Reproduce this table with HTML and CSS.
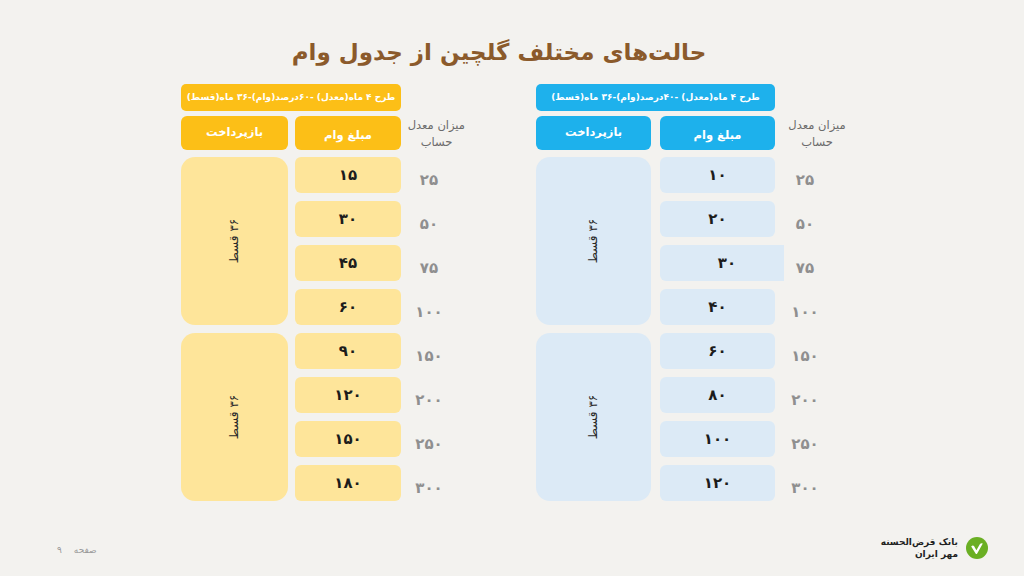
FILE: index.html
```html
<!DOCTYPE html>
<html lang="fa" dir="rtl">
<head>
<meta charset="utf-8">
<title>حالت‌های مختلف گلچین از جدول وام</title>
<link rel="stylesheet" href="styles.css">
</head>
<body>
<div class="page">
  <h1 class="title">حالت‌های مختلف گلچین از جدول وام</h1>

  <div class="tables">
    <!-- blue table -->
    <section class="table table-blue">
      <div class="banner">طرح ۴ ماه(معدل) -۴۰درصد(وام)-۳۶ ماه(قسط)</div>
      <div class="grid">
        <div class="label">میزان معدل<br>حساب</div>
        <div class="head head-amount">مبلغ وام</div>
        <div class="head head-repay">بازپرداخت</div>

        <div class="big big-1"><span class="rot">۳۶ قسط</span></div>
        <div class="big big-2"><span class="rot">۳۶ قسط</span></div>

        <div class="val r1">۲۵</div><div class="amt r1">۱۰</div>
        <div class="val r2">۵۰</div><div class="amt r2">۲۰</div>
        <div class="val r3">۷۵</div><div class="amt r3 amt-wide">۳۰</div>
        <div class="val r4">۱۰۰</div><div class="amt r4">۴۰</div>
        <div class="val r5">۱۵۰</div><div class="amt r5">۶۰</div>
        <div class="val r6">۲۰۰</div><div class="amt r6">۸۰</div>
        <div class="val r7">۲۵۰</div><div class="amt r7">۱۰۰</div>
        <div class="val r8">۳۰۰</div><div class="amt r8">۱۲۰</div>
      </div>
    </section>

    <!-- yellow table -->
    <section class="table table-yellow">
      <div class="banner">طرح ۴ ماه(معدل) -۶۰درصد(وام)-۳۶ ماه(قسط)</div>
      <div class="grid">
        <div class="label">میزان معدل<br>حساب</div>
        <div class="head head-amount">مبلغ وام</div>
        <div class="head head-repay">بازپرداخت</div>

        <div class="big big-1"><span class="rot">۳۶ قسط</span></div>
        <div class="big big-2"><span class="rot">۳۶ قسط</span></div>

        <div class="val r1">۲۵</div><div class="amt r1">۱۵</div>
        <div class="val r2">۵۰</div><div class="amt r2">۳۰</div>
        <div class="val r3">۷۵</div><div class="amt r3">۴۵</div>
        <div class="val r4">۱۰۰</div><div class="amt r4">۶۰</div>
        <div class="val r5">۱۵۰</div><div class="amt r5">۹۰</div>
        <div class="val r6">۲۰۰</div><div class="amt r6">۱۲۰</div>
        <div class="val r7">۲۵۰</div><div class="amt r7">۱۵۰</div>
        <div class="val r8">۳۰۰</div><div class="amt r8">۱۸۰</div>
      </div>
    </section>
  </div>

  <footer class="footer">
    <div class="brand">
      <svg class="brand-mark" width="22" height="22" viewBox="0 0 22 22" aria-hidden="true">
        <circle cx="11" cy="11" r="11" fill="#6aaf23"/>
        <path d="M5.2 9.6 L9.6 16.6 Q10.4 17.6 11.2 16.6 L16.8 6.4 Q15 5.6 13.8 7.2 L10.4 13.2 L8 9 Q6.6 8 5.2 9.6 Z" fill="#ffffff"/>
      </svg>
      <div class="brand-text">
        <div>بانک قرض‌الحسنه</div>
        <div>مهر ایران</div>
      </div>
    </div>
    <div class="pageno"><span>صفحه</span><span>۹</span></div>
  </footer>
</div>
</body>
</html>
```

FILE: styles.css
```css
* { box-sizing: border-box; }

html, body {
  margin: 0;
  padding: 0;
}

body {
  background: #f3f2ef;
  font-family: "DejaVu Sans", "Noto Sans", sans-serif;
  color: #222;
}

.page {
  width: 1024px;
  height: 576px;
  overflow: hidden;
  padding-top: 35px;
}

.title {
  margin: 0 0 15px 0;
  height: 34px;
  line-height: 34px;
  text-align: center;
  font-size: 23px;
  font-weight: bold;
  color: #8b5a2b;
  padding-right: 26px;
}

.tables {
  display: flex;
  flex-direction: row;
  gap: 71px;
  padding-right: 174px;
}

.table {
  display: flex;
  flex-direction: column;
}

.banner {
  height: 27px;
  line-height: 27px;
  border-radius: 5px;
  color: #fff;
  font-size: 9px;
  font-weight: bold;
  text-align: center;
  margin-bottom: 5px;
  white-space: nowrap;
  overflow: hidden;
}

.grid {
  display: grid;
  grid-template-rows: 33px repeat(8, 36px);
  row-gap: 8px;
}

.table-blue .banner { margin-right: 75px; width: 239px; background: #1eb1ec; }
.table-blue .grid { grid-template-columns: 66px 115px 115px; column-gap: 9px; }

.table-yellow .banner { margin-right: 64px; width: 220px; background: #fcbf17; }
.table-yellow .grid { grid-template-columns: 57px 106px 107px; column-gap: 7px; }

.label {
  grid-column: 1;
  grid-row: 1;
  font-size: 11.5px;
  line-height: 17px;
  color: #6b6b6b;
  text-align: center;
  padding-top: 1px;
  white-space: nowrap;
}

.head {
  grid-row: 1;
  height: 34px;
  border-radius: 6px;
  color: #fff;
  font-size: 11.5px;
  font-weight: bold;
  display: flex;
  align-items: center;
  justify-content: center;
}
.head-amount { grid-column: 2; padding-top: 3px; }
.head-repay { grid-column: 3; padding-bottom: 2px; }

.table-blue .head { background: #1db1ec; }
.table-yellow .head { background: #fcbf17; }

.big {
  grid-column: 3;
  border-radius: 14px;
  display: flex;
  align-items: center;
  justify-content: center;
}
.big-1 { grid-row: 2 / span 4; }
.big-2 { grid-row: 6 / span 4; }

.table-blue .big { background: #dceaf6; }
.table-yellow .big { background: #fee59a; }

.rot {
  display: inline-block;
  transform: rotate(-90deg);
  white-space: nowrap;
  font-size: 12px;
  color: #2a2a2a;
}

.amt {
  grid-column: 2;
  border-radius: 6px;
  display: flex;
  align-items: center;
  justify-content: center;
  font-size: 15px;
  font-weight: bold;
  color: #1c1c1c;
}
.table-blue .amt { background: #dceaf6; }
.table-yellow .amt { background: #fee59a; }

.amt-wide {
  margin-right: -9px;
  border-top-right-radius: 0;
  border-bottom-right-radius: 0;
  padding-left: 10px;
}

.val {
  grid-column: 1;
  display: flex;
  align-items: center;
  justify-content: center;
  font-size: 15px;
  font-weight: bold;
  color: #8f8f8f;
  padding-top: 9px;
}
.table-blue .val { padding-right: 24px; }
.table-yellow .val { padding-right: 15px; }

.r1 { grid-row: 2; }
.r2 { grid-row: 3; }
.r3 { grid-row: 4; }
.r4 { grid-row: 5; }
.r5 { grid-row: 6; }
.r6 { grid-row: 7; }
.r7 { grid-row: 8; }
.r8 { grid-row: 9; }

.footer {
  margin-top: 36px;
  height: 22px;
  display: flex;
  justify-content: space-between;
  align-items: center;
  padding-right: 36px;
  padding-left: 57px;
}

.brand {
  display: flex;
  align-items: center;
  gap: 8px;
}

.brand-mark { display: block; }

.brand-text {
  font-size: 9px;
  font-weight: bold;
  line-height: 12px;
  color: #222;
  text-align: right;
}

.pageno {
  display: flex;
  gap: 12px;
  font-size: 9px;
  color: #9a9a9a;
  padding-top: 4px;
}
```
